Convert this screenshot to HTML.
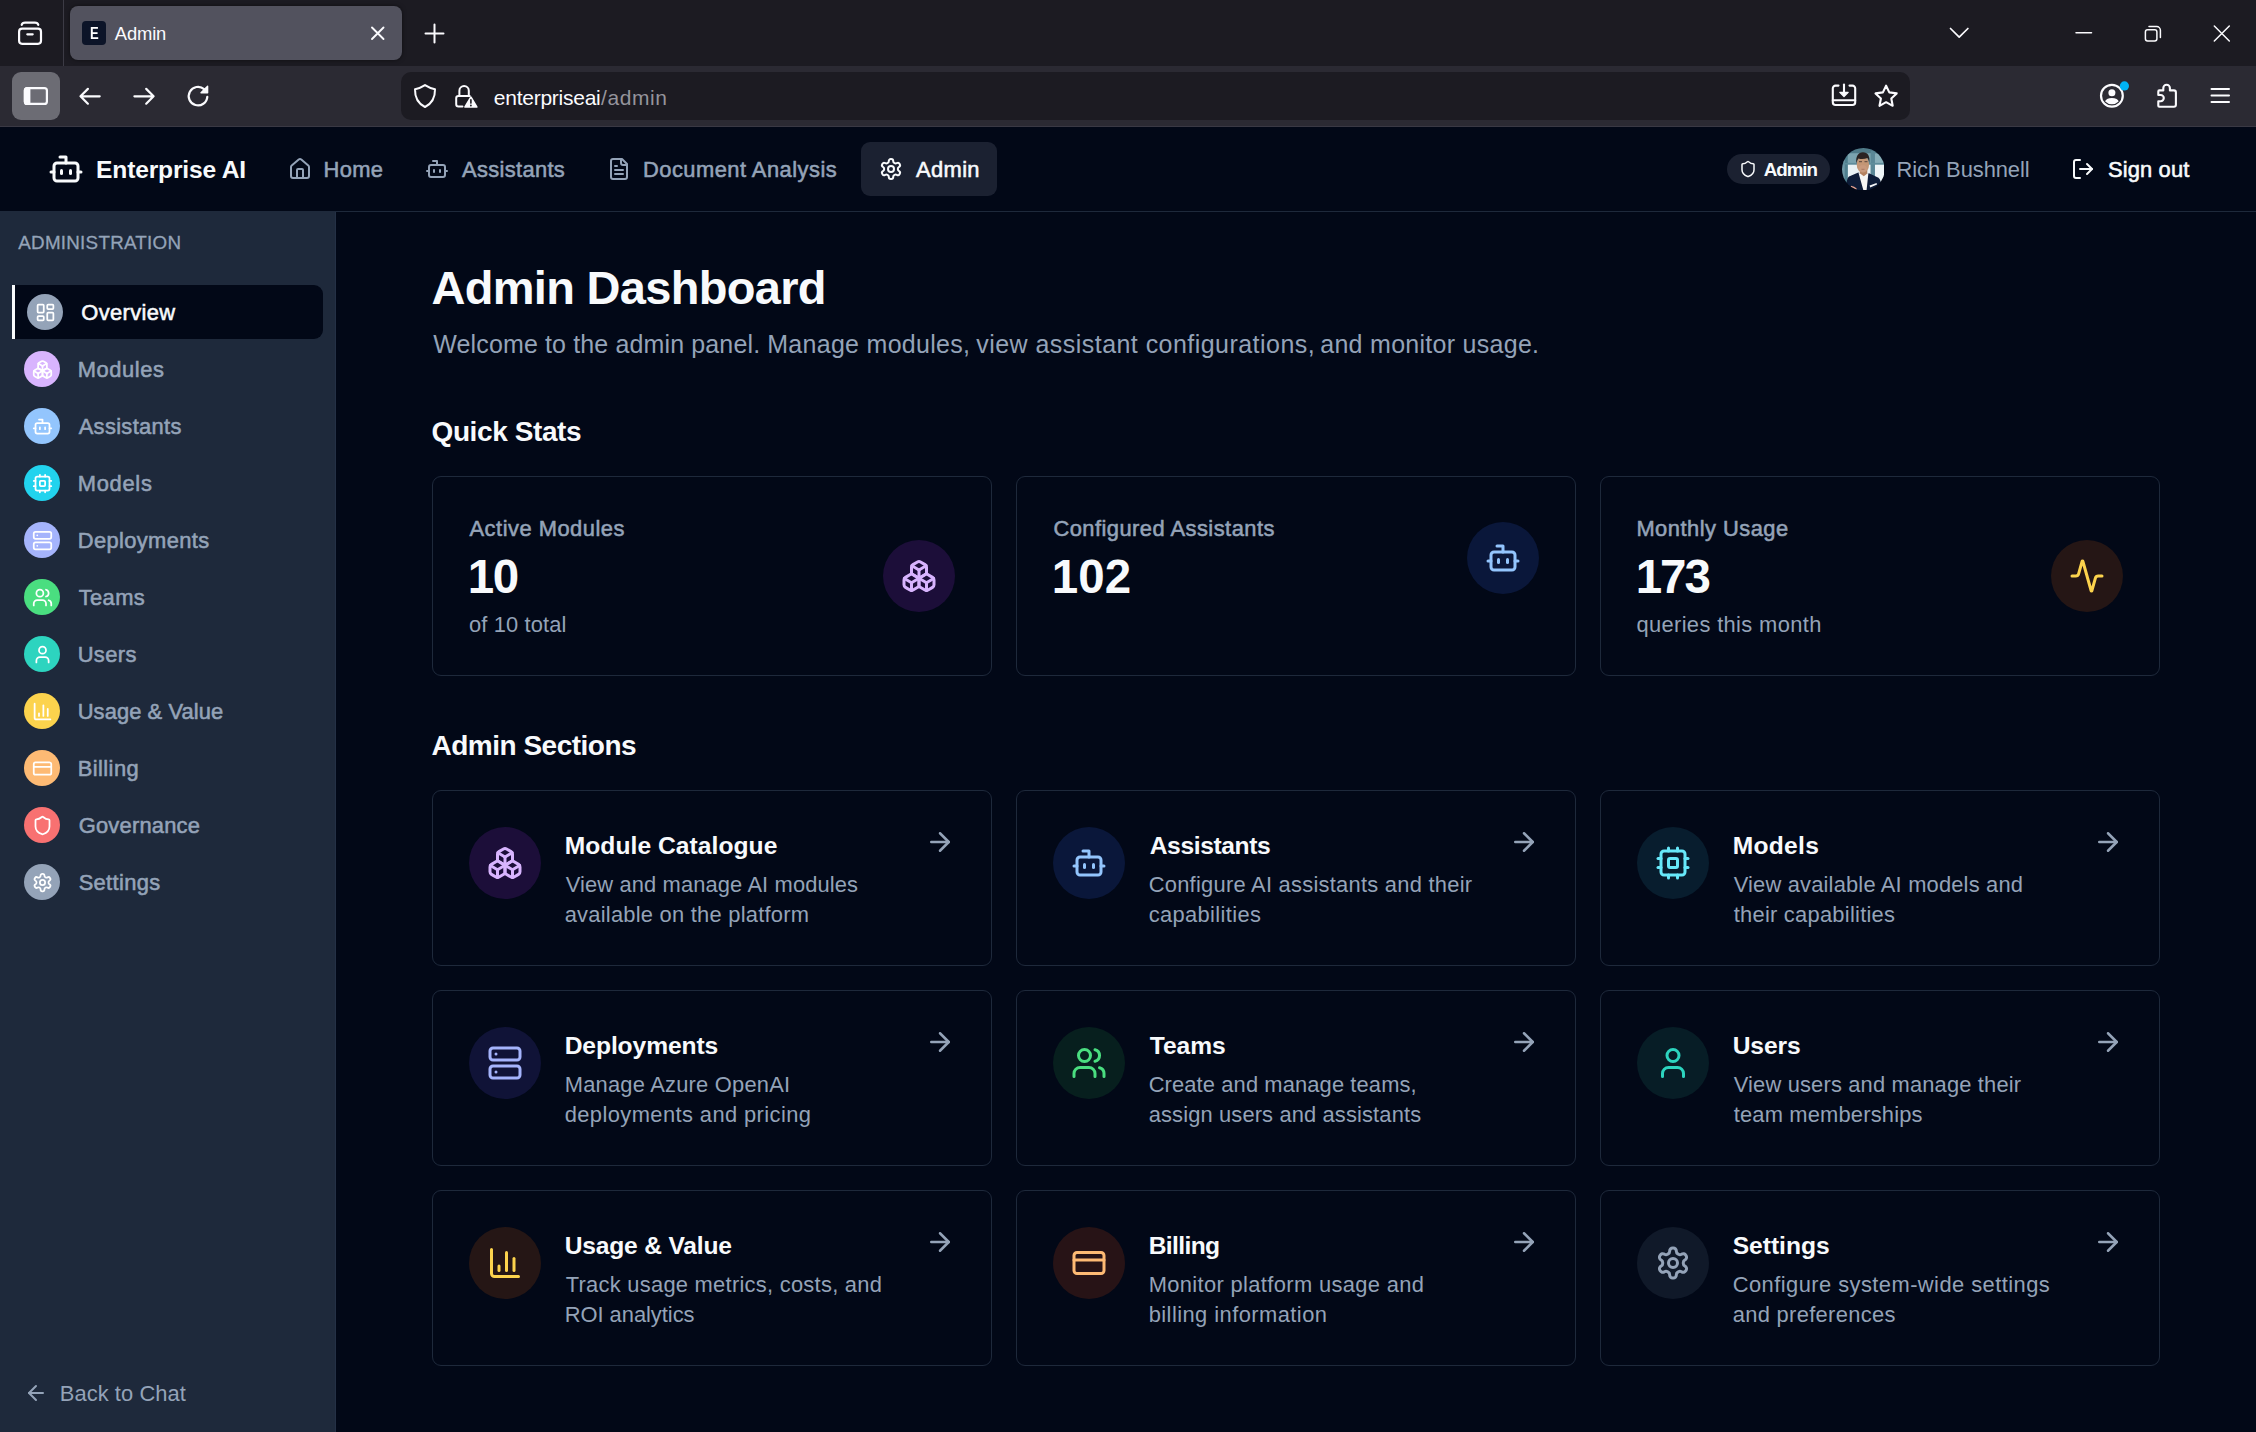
<!DOCTYPE html><html lang="en"><head><meta charset="utf-8"><title>Admin</title><style>
html,body{margin:0;padding:0;background:#020817;}
body{width:2256px;height:1432px;position:relative;overflow:hidden;font-family:"Liberation Sans",sans-serif;}
.abs,.ic,.t{position:absolute;display:block}
.t{line-height:1;white-space:pre;margin:0;padding:0}
</style></head><body>
<div id="browser-chrome">
<div class="abs" style="left:0;top:0;width:2256px;height:66px;background:#1c1b22"></div>
<div class="abs" style="left:0;top:66px;width:2256px;height:60px;background:#2b2a33"></div>
<div class="abs" style="left:0;top:126px;width:2256px;height:1px;background:#3a3944"></div>
<div class="abs" style="left:63px;top:0;width:1px;height:66px;background:#3c3b45"></div>
<div class="abs" style="left:70px;top:6px;width:332px;height:54px;border-radius:8px;background:#52525e;box-shadow:0 0 4px rgba(0,0,0,.5)"></div>
<div class="abs" style="left:82px;top:21px;width:24px;height:24px;border-radius:4px;background:#0c1428"></div>
<div class="abs" style="left:12px;top:72px;width:48px;height:48px;border-radius:9px;background:#6c6c74"></div>
<div class="abs" style="left:401px;top:72px;width:1509px;height:48px;border-radius:10px;background:#1c1b22"></div>
<svg class="abs" style="left:0;top:0" width="2256" height="127" viewBox="0 0 2256 127"><g fill="none" stroke="#fbfbfe" stroke-linecap="round" stroke-linejoin="round" stroke-width="2.2"><rect x="19.1" y="28.700" width="21.900" height="15.100" rx="3"/><path d="M21.700 24.900q.600-2.200 3.400-2.200h9.800q2.800 0 3.400 2.200"/><path d="M27.300 34.300h5.400"/></g><g fill="none" stroke="#fbfbfe" stroke-linecap="round" stroke-linejoin="round" stroke-width="1.9"><path d="M372 27.5l11.5 11.5M383.500 27.5l-11.500 11.500"/></g><g fill="none" stroke="#fbfbfe" stroke-linecap="round" stroke-linejoin="round" stroke-width="2"><path d="M425.500 33.5h18M434.500 24.5v18"/></g><g fill="none" stroke="#fbfbfe" stroke-linecap="round" stroke-linejoin="round" stroke-width="2.2"><rect x="24.900" y="88.100" width="22" height="15.800" rx="2.500"/><path d="M24.900 90.600a2.500 2.500 0 0 1 2.500-2.500h1.900v15.800h-1.900a2.500 2.500 0 0 1-2.500-2.500z" fill="#fbfbfe"/></g><g fill="none" stroke="#fbfbfe" stroke-linecap="round" stroke-linejoin="round" stroke-width="2.2"><path d="M99.700 96.300H80.500M87.900 88.900l-7.400 7.400 7.400 7.400"/><path d="M134.400 96.300h19.200M146.200 88.900l7.400 7.400-7.400 7.400"/></g><g fill="none" stroke="#fbfbfe" stroke-linecap="round" stroke-linejoin="round" stroke-width="2.2"><path d="M207.300 96.800a9.300 9.300 0 1 1-3.200-7.700"/><path d="M207.600 86.200v6.600h-6.600z" fill="#fbfbfe" stroke-width="1.4"/></g><g fill="none" stroke="#fbfbfe" stroke-linecap="round" stroke-linejoin="round" stroke-width="2"><path d="M425 85.100c-3.100 2-6.400 3.400-10 4.100-.2 8.900 3.400 14.500 10 17.800 6.600-3.300 10.200-8.900 10-17.800-3.600-.7-6.900-2.100-10-4.100z"/></g><g fill="none" stroke="#fbfbfe" stroke-linecap="round" stroke-linejoin="round" stroke-width="2"><path d="M459.400 96v-5.300a4.700 4.700 0 0 1 9.400 0V96"/><path d="M462.500 106.500h-4a2.300 2.300 0 0 1-2.300-2.300v-5.900a2.300 2.300 0 0 1 2.300-2.300h11.200"/></g><path d="M470.900 97.300l5.800 9.600h-11.600z" fill="#fbfbfe" stroke="#fbfbfe" stroke-width="1.800" stroke-linejoin="round"/><path d="M470.900 99.800v3.300" stroke="#1c1b22" stroke-width="1.600" stroke-linecap="round"/><circle cx="470.900" cy="105.500" r=".9" fill="#1c1b22"/><g fill="none" stroke="#fbfbfe" stroke-linecap="round" stroke-linejoin="round" stroke-width="2.100"><path d="M1838.500 85.600h-3a2.700 2.700 0 0 0-2.700 2.700v14a2.700 2.700 0 0 0 2.700 2.700h17a2.700 2.700 0 0 0 2.700-2.700v-14a2.700 2.700 0 0 0-2.700-2.700h-3"/><path d="M1832.800 100.300h22.400"/><path d="M1844 84.500v9"/><path d="M1839.800 92.300l4.200 4.200 4.200-4.200z" fill="#fbfbfe" stroke-width="1.200"/></g><g fill="none" stroke="#fbfbfe" stroke-linecap="round" stroke-linejoin="round" stroke-width="2.100"><path d="M1886.100 85.700l3.200 6.700 7.400 1-5.400 5.100 1.400 7.300-6.600-3.600-6.600 3.600 1.400-7.300-5.400-5.100 7.400-1z"/></g><g fill="none" stroke="#fbfbfe" stroke-linecap="round" stroke-linejoin="round" stroke-width="2.200"><circle cx="2111.900" cy="95.800" r="10.900"/></g><circle cx="2111.900" cy="92.800" r="3.500" fill="#fbfbfe"/><path d="M2105.200 101.600a6.700 3.600 0 0 1 13.400 0q-2.600 2.700-6.700 2.700t-6.700-2.700z" fill="#fbfbfe"/><circle cx="2124.400" cy="85.900" r="4.600" fill="#00b3f4"/><g fill="none" stroke="#fbfbfe" stroke-linecap="round" stroke-linejoin="round" stroke-width="2.100"><path d="M2163.300 90.400v-2.400a3.300 3.300 0 0 1 6.600 0v2.400h4a2 2 0 0 1 2 2v12.300a2 2 0 0 1-2 2h-14.600a1 1 0 0 1-1-1v-4.500h2.400a3.100 3.100 0 0 0 0-6.200h-2.400v-3.600a1 1 0 0 1 1-1z"/></g><g fill="none" stroke="#fbfbfe" stroke-linecap="round" stroke-linejoin="round" stroke-width="2"><path d="M2211.500 89h17.500M2211.500 95.500h17.500M2211.500 102h17.500"/></g><g fill="none" stroke="#fbfbfe" stroke-linecap="round" stroke-linejoin="round" stroke-width="1.700"><path d="M1950.500 28.500l8.700 8.700 8.700-8.700"/></g><g fill="none" stroke="#fbfbfe" stroke-linecap="round" stroke-linejoin="round" stroke-width="1.500" stroke-linecap="butt"><path d="M2076 32.700h15.500"/><rect x="2145.400" y="29.800" width="11.500" height="11.200" rx="2.200"/><path d="M2149 26.600h7.700a3.700 3.700 0 0 1 3.700 3.700v7.300"/><path d="M2214.300 26l15 15M2229.300 26l-15 15"/></g></svg>
<span class="t" style="left:114.80px;top:25px;color:#fbfbfe;font-size:18.4px;font-weight:400;letter-spacing:-0.150px;">Admin</span>
<span class="t" style="left:493.80px;top:87px;color:#fbfbfe;font-size:21px;font-weight:400;letter-spacing:-0.255px;">enterpriseai</span>
<span class="t" style="left:601.00px;top:87px;color:#95949c;font-size:21px;font-weight:400;letter-spacing:0.600px;">/admin</span>
<span class="t" style="left:89.90px;top:26px;color:#ffffff;font-size:15.7px;font-weight:700;transform:scaleX(0.83);transform-origin:0 0;">E</span>
</div>
<header id="app-header">
<div class="abs" style="left:0px;top:127px;width:2256px;height:84px;background:#020817"></div>
<div class="abs" style="left:0px;top:211px;width:2256px;height:1px;background:#1e293b"></div>
<svg class="ic" style="left:48px;top:151px" width="36" height="36" viewBox="0 0 24 24" fill="none" stroke="#f8fafc" stroke-width="2" stroke-linecap="round" stroke-linejoin="round"><path d="M12 8V4H8"/><rect width="16" height="12" x="4" y="8" rx="2"/><path d="M2 14h2"/><path d="M20 14h2"/><path d="M15 13v2"/><path d="M9 13v2"/></svg>
<svg class="ic" style="left:288px;top:157px" width="24" height="24" viewBox="0 0 24 24" fill="none" stroke="#94a3b8" stroke-width="2" stroke-linecap="round" stroke-linejoin="round"><path d="M15 21v-8a1 1 0 0 0-1-1h-4a1 1 0 0 0-1 1v8"/><path d="M3 10a2 2 0 0 1 .709-1.528l7-5.999a2 2 0 0 1 2.582 0l7 5.999A2 2 0 0 1 21 10v9a2 2 0 0 1-2 2H5a2 2 0 0 1-2-2z"/></svg>
<svg class="ic" style="left:425px;top:157px" width="24" height="24" viewBox="0 0 24 24" fill="none" stroke="#94a3b8" stroke-width="2" stroke-linecap="round" stroke-linejoin="round"><path d="M12 8V4H8"/><rect width="16" height="12" x="4" y="8" rx="2"/><path d="M2 14h2"/><path d="M20 14h2"/><path d="M15 13v2"/><path d="M9 13v2"/></svg>
<svg class="ic" style="left:607px;top:157px" width="24" height="24" viewBox="0 0 24 24" fill="none" stroke="#94a3b8" stroke-width="2" stroke-linecap="round" stroke-linejoin="round"><path d="M15 2H6a2 2 0 0 0-2 2v16a2 2 0 0 0 2 2h12a2 2 0 0 0 2-2V7Z"/><path d="M14 2v4a2 2 0 0 0 2 2h4"/><path d="M10 9H8"/><path d="M16 13H8"/><path d="M16 17H8"/></svg>
<div class="abs" style="left:861px;top:142px;width:136px;height:54px;border-radius:9px;background:#1b2131"></div>
<svg class="ic" style="left:879px;top:157px" width="24" height="24" viewBox="0 0 24 24" fill="none" stroke="#f8fafc" stroke-width="2" stroke-linecap="round" stroke-linejoin="round"><path d="M12.22 2h-.44a2 2 0 0 0-2 2v.18a2 2 0 0 1-1 1.73l-.43.25a2 2 0 0 1-2 0l-.15-.08a2 2 0 0 0-2.73.73l-.22.38a2 2 0 0 0 .73 2.73l.15.1a2 2 0 0 1 1 1.72v.51a2 2 0 0 1-1 1.74l-.15.09a2 2 0 0 0-.73 2.73l.22.38a2 2 0 0 0 2.73.73l.15-.08a2 2 0 0 1 2 0l.43.25a2 2 0 0 1 1 1.73V20a2 2 0 0 0 2 2h.44a2 2 0 0 0 2-2v-.18a2 2 0 0 1 1-1.73l.43-.25a2 2 0 0 1 2 0l.15.08a2 2 0 0 0 2.73-.73l.22-.39a2 2 0 0 0-.73-2.73l-.15-.08a2 2 0 0 1-1-1.74v-.5a2 2 0 0 1 1-1.74l.15-.09a2 2 0 0 0 .73-2.73l-.22-.38a2 2 0 0 0-2.73-.73l-.15.08a2 2 0 0 1-2 0l-.43-.25a2 2 0 0 1-1-1.73V4a2 2 0 0 0-2-2z"/><circle cx="12" cy="12" r="3"/></svg>
<div class="abs" style="left:1727px;top:154px;width:103px;height:30px;border-radius:15px;background:#1b2131"></div>
<svg class="ic" style="left:1739px;top:160px" width="18" height="18" viewBox="0 0 24 24" fill="none" stroke="#f8fafc" stroke-width="2" stroke-linecap="round" stroke-linejoin="round"><path d="M20 13c0 5-3.5 7.5-7.66 8.950a1 1 0 0 1-.67-.010C7.5 20.5 4 18 4 13V6a1 1 0 0 1 1-1c2 0 4.500-1.200 6.240-2.720a1.170 1.170 0 0 1 1.520 0C14.510 3.810 17 5 19 5a1 1 0 0 1 1 1z"/></svg>
<svg class="abs" style="left:1841.65px;top:147.65px" width="42.7" height="42.7" viewBox="0 0 42.700 42.700"><defs><clipPath id="av"><circle cx="21.350" cy="21.350" r="21.350"/></clipPath><filter id="avb" x="-10%" y="-10%" width="120%" height="120%"><feGaussianBlur stdDeviation=".55"/></filter></defs><g clip-path="url(#av)"><g filter="url(#avb)"><rect x="-2" y="-2" width="47" height="47" fill="#6f99a6"/><rect x="-2" y="-2" width="47" height="7" fill="#4f7a88"/><rect x="5.700" y="16.500" width="23" height="20" fill="#e9f2f5"/><rect x="32.900" y="16.500" width="12" height="22" fill="#eef5f7"/><rect x="5.700" y="6" width="23" height="9" fill="#7aa3af"/><rect x="32.900" y="6" width="12" height="9" fill="#86adb8"/><rect x="2.700" y="3" width="3" height="40" fill="#4f7f8e"/><rect x="28.700" y="3" width="4.200" height="40" fill="#5a8796"/><rect x="-2" y="14.900" width="47" height="1.600" fill="#5f8d9b"/><path d="M4.500 43c-.5-8 .5-13 2.500-14.500l9.300-4 5 3 5.700-2.200 9.500 4.500c2.500 2 3 7 3 13.200z" fill="#0f1b38"/><path d="M16.500 24.800l5.300 19h2.600l2-18.500-4.600 1.700z" fill="#f6f6f4"/><path d="M17.800 20h7.500v5.600l-3.500 2.600-4-3z" fill="#b5825f"/><ellipse cx="20.900" cy="16.600" rx="6.200" ry="8.100" fill="#c39674"/><ellipse cx="20.900" cy="20.500" rx="4" ry="3.600" fill="#c99a7d"/><path d="M14.500 15.500c-1.200-7 1.800-11.300 6.400-11.300 4.800 0 7.600 3.900 6.300 11-.3-2.500-.9-4-1.800-5.200-2.600 1.200-6.400 1.300-9 .5-.9 1.200-1.500 2.700-1.900 5z" fill="#2b2321"/><path d="M17 13.700h3M22.500 13.700h3" stroke="#4a3a33" stroke-width=".9"/><path d="M19.500 21.300h3" stroke="#9c6a56" stroke-width=".7"/><path d="M27.600 37.600l7-2.600.4 1.600-6.800 2.800z" fill="#f4f6f8"/><path d="M9 37.800c2 .3 4.500 1.500 6 3.300l-1 1c-2-1.300-4-2-5.500-2.800z" fill="#e0a090"/></g></g></svg>
<svg class="ic" style="left:2070.5px;top:157px" width="24" height="24" viewBox="0 0 24 24" fill="none" stroke="#f8fafc" stroke-width="2" stroke-linecap="round" stroke-linejoin="round"><path d="M9 21H5a2 2 0 0 1-2-2V5a2 2 0 0 1 2-2h4"/><polyline points="16 17 21 12 16 7"/><line x1="21" x2="9" y1="12" y2="12"/></svg>
<span class="t" style="left:96.10px;top:158px;color:#f8fafc;font-size:24.6px;font-weight:700;letter-spacing:-0.183px;">Enterprise AI</span>
<span class="t" style="left:323.50px;top:159px;color:#94a3b8;font-size:21.9px;font-weight:400;letter-spacing:0.333px;-webkit-text-stroke:0.55px currentColor;">Home</span>
<span class="t" style="left:462.00px;top:159px;color:#94a3b8;font-size:21.9px;font-weight:400;letter-spacing:0.333px;-webkit-text-stroke:0.55px currentColor;">Assistants</span>
<span class="t" style="left:643.00px;top:159px;color:#94a3b8;font-size:21.9px;font-weight:400;letter-spacing:0.469px;-webkit-text-stroke:0.55px currentColor;">Document Analysis</span>
<span class="t" style="left:916.00px;top:159px;color:#f8fafc;font-size:21.9px;font-weight:400;letter-spacing:0.375px;-webkit-text-stroke:0.55px currentColor;">Admin</span>
<span class="t" style="left:1763.80px;top:161px;color:#f8fafc;font-size:18.8px;font-weight:700;letter-spacing:-1.075px;">Admin</span>
<span class="t" style="left:1896.50px;top:159px;color:#94a3b8;font-size:21.9px;font-weight:400;letter-spacing:-0.058px;">Rich Bushnell</span>
<span class="t" style="left:2108.00px;top:159px;color:#f8fafc;font-size:21.9px;font-weight:400;letter-spacing:0.143px;-webkit-text-stroke:0.55px currentColor;">Sign out</span>
</header>
<aside id="admin-sidebar">
<div class="abs" style="left:0px;top:212px;width:336px;height:1220px;background:#1e293b"></div>
<div class="abs" style="left:335px;top:212px;width:1px;height:1220px;background:#243045"></div>
<div class="abs" style="left:12px;top:285px;width:311px;height:54px;background:#020817;border-left:3px solid #f8fafc;border-radius:0 9px 9px 0;box-sizing:border-box"></div>
<div class="abs" style="left:27px;top:294px;width:36px;height:36px;border-radius:50%;background:#94a3b8"></div>
<svg class="ic" style="left:34.5px;top:301.5px" width="21" height="21" viewBox="0 0 24 24" fill="none" stroke="#ffffff" stroke-width="2" stroke-linecap="round" stroke-linejoin="round"><rect width="7" height="9" x="3" y="3" rx="1"/><rect width="7" height="5" x="14" y="3" rx="1"/><rect width="7" height="9" x="14" y="12" rx="1"/><rect width="7" height="5" x="3" y="16" rx="1"/></svg>
<div class="abs" style="left:24px;top:351px;width:36px;height:36px;border-radius:50%;background:#d8b4fe"></div>
<svg class="ic" style="left:31.5px;top:358.5px" width="21" height="21" viewBox="0 0 24 24" fill="none" stroke="#ffffff" stroke-width="2" stroke-linecap="round" stroke-linejoin="round"><path d="M2.970 12.920A2 2 0 0 0 2 14.630v3.240a2 2 0 0 0 .970 1.710l3 1.800a2 2 0 0 0 2.060 0L12 19v-5.500l-5-3-4.030 2.420Z"/><path d="m7 16.500-4.740-2.850"/><path d="m7 16.500 5-3"/><path d="M7 16.500v5.170"/><path d="M12 13.500V19l3.970 2.380a2 2 0 0 0 2.060 0l3-1.800a2 2 0 0 0 .970-1.710v-3.240a2 2 0 0 0-.970-1.710L17 10.500l-5 3Z"/><path d="m17 16.500-5-3"/><path d="m17 16.500 4.740-2.850"/><path d="M17 16.500v5.170"/><path d="M7.970 4.420A2 2 0 0 0 7 6.130v4.370l5 3 5-3V6.130a2 2 0 0 0-.970-1.710l-3-1.800a2 2 0 0 0-2.060 0l-3 1.800Z"/><path d="M12 8 7.260 5.150"/><path d="m12 8 4.740-2.850"/><path d="M12 13.500V8"/></svg>
<div class="abs" style="left:24px;top:408px;width:36px;height:36px;border-radius:50%;background:#93c5fd"></div>
<svg class="ic" style="left:31.5px;top:415.5px" width="21" height="21" viewBox="0 0 24 24" fill="none" stroke="#ffffff" stroke-width="2" stroke-linecap="round" stroke-linejoin="round"><path d="M12 8V4H8"/><rect width="16" height="12" x="4" y="8" rx="2"/><path d="M2 14h2"/><path d="M20 14h2"/><path d="M15 13v2"/><path d="M9 13v2"/></svg>
<div class="abs" style="left:24px;top:465px;width:36px;height:36px;border-radius:50%;background:#22d3ee"></div>
<svg class="ic" style="left:31.5px;top:472.5px" width="21" height="21" viewBox="0 0 24 24" fill="none" stroke="#ffffff" stroke-width="2" stroke-linecap="round" stroke-linejoin="round"><rect width="16" height="16" x="4" y="4" rx="2"/><rect width="6" height="6" x="9" y="9" rx="1"/><path d="M15 2v2"/><path d="M15 20v2"/><path d="M2 15h2"/><path d="M2 9h2"/><path d="M20 15h2"/><path d="M20 9h2"/><path d="M9 2v2"/><path d="M9 20v2"/></svg>
<div class="abs" style="left:24px;top:522px;width:36px;height:36px;border-radius:50%;background:#a5b4fc"></div>
<svg class="ic" style="left:31.5px;top:529.5px" width="21" height="21" viewBox="0 0 24 24" fill="none" stroke="#ffffff" stroke-width="2" stroke-linecap="round" stroke-linejoin="round"><rect width="20" height="8" x="2" y="2" rx="2" ry="2"/><rect width="20" height="8" x="2" y="14" rx="2" ry="2"/><line x1="6" x2="6.010" y1="6" y2="6"/><line x1="6" x2="6.010" y1="18" y2="18"/></svg>
<div class="abs" style="left:24px;top:579px;width:36px;height:36px;border-radius:50%;background:#4ade80"></div>
<svg class="ic" style="left:31.5px;top:586.5px" width="21" height="21" viewBox="0 0 24 24" fill="none" stroke="#ffffff" stroke-width="2" stroke-linecap="round" stroke-linejoin="round"><path d="M16 21v-2a4 4 0 0 0-4-4H6a4 4 0 0 0-4 4v2"/><circle cx="9" cy="7" r="4"/><path d="M22 21v-2a4 4 0 0 0-3-3.870"/><path d="M16 3.130a4 4 0 0 1 0 7.750"/></svg>
<div class="abs" style="left:24px;top:636px;width:36px;height:36px;border-radius:50%;background:#2dd4bf"></div>
<svg class="ic" style="left:31.5px;top:643.5px" width="21" height="21" viewBox="0 0 24 24" fill="none" stroke="#ffffff" stroke-width="2" stroke-linecap="round" stroke-linejoin="round"><path d="M19 21v-2a4 4 0 0 0-4-4H9a4 4 0 0 0-4 4v2"/><circle cx="12" cy="7" r="4"/></svg>
<div class="abs" style="left:24px;top:693px;width:36px;height:36px;border-radius:50%;background:#fcd34d"></div>
<svg class="ic" style="left:31.5px;top:700.5px" width="21" height="21" viewBox="0 0 24 24" fill="none" stroke="#ffffff" stroke-width="2" stroke-linecap="round" stroke-linejoin="round"><path d="M3 3v16a2 2 0 0 0 2 2h16"/><path d="M18 17V9"/><path d="M13 17V5"/><path d="M8 17v-3"/></svg>
<div class="abs" style="left:24px;top:750px;width:36px;height:36px;border-radius:50%;background:#fdba74"></div>
<svg class="ic" style="left:31.5px;top:757.5px" width="21" height="21" viewBox="0 0 24 24" fill="none" stroke="#ffffff" stroke-width="2" stroke-linecap="round" stroke-linejoin="round"><rect width="20" height="14" x="2" y="5" rx="2"/><line x1="2" x2="22" y1="10" y2="10"/></svg>
<div class="abs" style="left:24px;top:807px;width:36px;height:36px;border-radius:50%;background:#f87171"></div>
<svg class="ic" style="left:31.5px;top:814.5px" width="21" height="21" viewBox="0 0 24 24" fill="none" stroke="#ffffff" stroke-width="2" stroke-linecap="round" stroke-linejoin="round"><path d="M20 13c0 5-3.5 7.5-7.66 8.950a1 1 0 0 1-.67-.010C7.5 20.5 4 18 4 13V6a1 1 0 0 1 1-1c2 0 4.500-1.200 6.240-2.720a1.170 1.170 0 0 1 1.520 0C14.510 3.810 17 5 19 5a1 1 0 0 1 1 1z"/></svg>
<div class="abs" style="left:24px;top:864px;width:36px;height:36px;border-radius:50%;background:#94a3b8"></div>
<svg class="ic" style="left:31.5px;top:871.5px" width="21" height="21" viewBox="0 0 24 24" fill="none" stroke="#ffffff" stroke-width="2" stroke-linecap="round" stroke-linejoin="round"><path d="M12.22 2h-.44a2 2 0 0 0-2 2v.18a2 2 0 0 1-1 1.73l-.43.25a2 2 0 0 1-2 0l-.15-.08a2 2 0 0 0-2.73.73l-.22.38a2 2 0 0 0 .73 2.73l.15.1a2 2 0 0 1 1 1.72v.51a2 2 0 0 1-1 1.74l-.15.09a2 2 0 0 0-.73 2.73l.22.38a2 2 0 0 0 2.73.73l.15-.08a2 2 0 0 1 2 0l.43.25a2 2 0 0 1 1 1.73V20a2 2 0 0 0 2 2h.44a2 2 0 0 0 2-2v-.18a2 2 0 0 1 1-1.73l.43-.25a2 2 0 0 1 2 0l.15.08a2 2 0 0 0 2.73-.73l.22-.39a2 2 0 0 0-.73-2.73l-.15-.08a2 2 0 0 1-1-1.74v-.5a2 2 0 0 1 1-1.74l.15-.09a2 2 0 0 0 .73-2.73l-.22-.38a2 2 0 0 0-2.73-.73l-.15.08a2 2 0 0 1-2 0l-.43-.25a2 2 0 0 1-1-1.73V4a2 2 0 0 0-2-2z"/><circle cx="12" cy="12" r="3"/></svg>
<svg class="ic" style="left:23.7px;top:1381.4px" width="24" height="24" viewBox="0 0 24 24" fill="none" stroke="#94a3b8" stroke-width="2" stroke-linecap="round" stroke-linejoin="round"><path d="m12 19-7-7 7-7"/><path d="M19 12H5"/></svg>
<span class="t" style="left:18.30px;top:234px;color:#94a3b8;font-size:18.8px;font-weight:400;letter-spacing:0.262px;-webkit-text-stroke:0.3px currentColor;">ADMINISTRATION</span>
<span class="t" style="left:81.30px;top:302px;color:#f8fafc;font-size:21.9px;font-weight:400;letter-spacing:0.357px;-webkit-text-stroke:0.55px currentColor;">Overview</span>
<span class="t" style="left:77.70px;top:359px;color:#94a3b8;font-size:21.9px;font-weight:400;letter-spacing:0.583px;-webkit-text-stroke:0.55px currentColor;">Modules</span>
<span class="t" style="left:78.70px;top:416px;color:#94a3b8;font-size:21.9px;font-weight:400;letter-spacing:0.333px;-webkit-text-stroke:0.55px currentColor;">Assistants</span>
<span class="t" style="left:77.70px;top:473px;color:#94a3b8;font-size:21.9px;font-weight:400;letter-spacing:0.720px;-webkit-text-stroke:0.55px currentColor;">Models</span>
<span class="t" style="left:77.70px;top:530px;color:#94a3b8;font-size:21.9px;font-weight:400;letter-spacing:0.380px;-webkit-text-stroke:0.55px currentColor;">Deployments</span>
<span class="t" style="left:78.70px;top:587px;color:#94a3b8;font-size:21.9px;font-weight:400;letter-spacing:0.400px;-webkit-text-stroke:0.55px currentColor;">Teams</span>
<span class="t" style="left:77.70px;top:644px;color:#94a3b8;font-size:21.9px;font-weight:400;letter-spacing:0.375px;-webkit-text-stroke:0.55px currentColor;">Users</span>
<span class="t" style="left:77.70px;top:701px;color:#94a3b8;font-size:21.9px;font-weight:400;letter-spacing:0.092px;-webkit-text-stroke:0.55px currentColor;">Usage &amp; Value</span>
<span class="t" style="left:77.70px;top:758px;color:#94a3b8;font-size:21.9px;font-weight:400;letter-spacing:0.433px;-webkit-text-stroke:0.55px currentColor;">Billing</span>
<span class="t" style="left:78.70px;top:815px;color:#94a3b8;font-size:21.9px;font-weight:400;letter-spacing:0.222px;-webkit-text-stroke:0.55px currentColor;">Governance</span>
<span class="t" style="left:78.70px;top:872px;color:#94a3b8;font-size:21.9px;font-weight:400;letter-spacing:0.329px;-webkit-text-stroke:0.55px currentColor;">Settings</span>
<span class="t" style="left:59.80px;top:1383px;color:#94a3b8;font-size:21.9px;font-weight:400;letter-spacing:0.064px;">Back to Chat</span>
</aside>
<main id="admin-main">
<div class="abs" style="left:336px;top:212px;width:1920px;height:1220px;background:#020817"></div>
<div class="abs" style="left:432px;top:476px;width:560px;height:200px;border:1px solid #1e293b;border-radius:9px;box-sizing:border-box"></div>
<div class="abs" style="left:883px;top:540px;width:72px;height:72px;border-radius:50%;background:#1c0e39"></div>
<svg class="ic" style="left:901px;top:558px" width="36" height="36" viewBox="0 0 24 24" fill="none" stroke="#d8b4fe" stroke-width="2" stroke-linecap="round" stroke-linejoin="round"><path d="M2.970 12.920A2 2 0 0 0 2 14.630v3.240a2 2 0 0 0 .970 1.710l3 1.800a2 2 0 0 0 2.060 0L12 19v-5.500l-5-3-4.030 2.420Z"/><path d="m7 16.500-4.740-2.850"/><path d="m7 16.500 5-3"/><path d="M7 16.500v5.170"/><path d="M12 13.500V19l3.970 2.380a2 2 0 0 0 2.060 0l3-1.800a2 2 0 0 0 .970-1.710v-3.240a2 2 0 0 0-.970-1.710L17 10.500l-5 3Z"/><path d="m17 16.500-5-3"/><path d="m17 16.500 4.740-2.850"/><path d="M17 16.500v5.170"/><path d="M7.970 4.420A2 2 0 0 0 7 6.130v4.370l5 3 5-3V6.130a2 2 0 0 0-.970-1.710l-3-1.800a2 2 0 0 0-2.060 0l-3 1.800Z"/><path d="M12 8 7.260 5.150"/><path d="m12 8 4.740-2.850"/><path d="M12 13.500V8"/></svg>
<div class="abs" style="left:1016px;top:476px;width:560px;height:200px;border:1px solid #1e293b;border-radius:9px;box-sizing:border-box"></div>
<div class="abs" style="left:1467px;top:522px;width:72px;height:72px;border-radius:50%;background:#0a173a"></div>
<svg class="ic" style="left:1485px;top:540px" width="36" height="36" viewBox="0 0 24 24" fill="none" stroke="#93c5fd" stroke-width="2" stroke-linecap="round" stroke-linejoin="round"><path d="M12 8V4H8"/><rect width="16" height="12" x="4" y="8" rx="2"/><path d="M2 14h2"/><path d="M20 14h2"/><path d="M15 13v2"/><path d="M9 13v2"/></svg>
<div class="abs" style="left:1600px;top:476px;width:560px;height:200px;border:1px solid #1e293b;border-radius:9px;box-sizing:border-box"></div>
<div class="abs" style="left:2051px;top:540px;width:72px;height:72px;border-radius:50%;background:#251615"></div>
<svg class="ic" style="left:2069px;top:558px" width="36" height="36" viewBox="0 0 24 24" fill="none" stroke="#fcd34d" stroke-width="2" stroke-linecap="round" stroke-linejoin="round"><path d="M22 12h-2.480a2 2 0 0 0-1.930 1.460l-2.350 8.360a.250.250 0 0 1-.480 0L9.240 2.180a.250.250 0 0 0-.480 0l-2.350 8.360A2 2 0 0 1 4.490 12H2"/></svg>
<div class="abs" style="left:432px;top:790px;width:560px;height:176px;border:1px solid #1e293b;border-radius:9px;box-sizing:border-box"></div>
<div class="abs" style="left:469px;top:827px;width:72px;height:72px;border-radius:50%;background:#1c0e39"></div>
<svg class="ic" style="left:487px;top:845px" width="36" height="36" viewBox="0 0 24 24" fill="none" stroke="#d8b4fe" stroke-width="2" stroke-linecap="round" stroke-linejoin="round"><path d="M2.970 12.920A2 2 0 0 0 2 14.630v3.240a2 2 0 0 0 .970 1.710l3 1.800a2 2 0 0 0 2.060 0L12 19v-5.500l-5-3-4.030 2.420Z"/><path d="m7 16.500-4.740-2.850"/><path d="m7 16.500 5-3"/><path d="M7 16.500v5.170"/><path d="M12 13.500V19l3.970 2.380a2 2 0 0 0 2.060 0l3-1.800a2 2 0 0 0 .970-1.710v-3.240a2 2 0 0 0-.970-1.710L17 10.500l-5 3Z"/><path d="m17 16.500-5-3"/><path d="m17 16.500 4.740-2.850"/><path d="M17 16.500v5.170"/><path d="M7.970 4.420A2 2 0 0 0 7 6.130v4.370l5 3 5-3V6.130a2 2 0 0 0-.970-1.710l-3-1.800a2 2 0 0 0-2.060 0l-3 1.800Z"/><path d="M12 8 7.260 5.150"/><path d="m12 8 4.740-2.850"/><path d="M12 13.500V8"/></svg>
<svg class="ic" style="left:925px;top:827px" width="30" height="30" viewBox="0 0 24 24" fill="none" stroke="#94a3b8" stroke-width="2" stroke-linecap="round" stroke-linejoin="round"><path d="M5 12h14"/><path d="m12 5 7 7-7 7"/></svg>
<div class="abs" style="left:1016px;top:790px;width:560px;height:176px;border:1px solid #1e293b;border-radius:9px;box-sizing:border-box"></div>
<div class="abs" style="left:1053px;top:827px;width:72px;height:72px;border-radius:50%;background:#0a173a"></div>
<svg class="ic" style="left:1071px;top:845px" width="36" height="36" viewBox="0 0 24 24" fill="none" stroke="#93c5fd" stroke-width="2" stroke-linecap="round" stroke-linejoin="round"><path d="M12 8V4H8"/><rect width="16" height="12" x="4" y="8" rx="2"/><path d="M2 14h2"/><path d="M20 14h2"/><path d="M15 13v2"/><path d="M9 13v2"/></svg>
<svg class="ic" style="left:1509px;top:827px" width="30" height="30" viewBox="0 0 24 24" fill="none" stroke="#94a3b8" stroke-width="2" stroke-linecap="round" stroke-linejoin="round"><path d="M5 12h14"/><path d="m12 5 7 7-7 7"/></svg>
<div class="abs" style="left:1600px;top:790px;width:560px;height:176px;border:1px solid #1e293b;border-radius:9px;box-sizing:border-box"></div>
<div class="abs" style="left:1637px;top:827px;width:72px;height:72px;border-radius:50%;background:#081d2e"></div>
<svg class="ic" style="left:1655px;top:845px" width="36" height="36" viewBox="0 0 24 24" fill="none" stroke="#67e8f9" stroke-width="2" stroke-linecap="round" stroke-linejoin="round"><rect width="16" height="16" x="4" y="4" rx="2"/><rect width="6" height="6" x="9" y="9" rx="1"/><path d="M15 2v2"/><path d="M15 20v2"/><path d="M2 15h2"/><path d="M2 9h2"/><path d="M20 15h2"/><path d="M20 9h2"/><path d="M9 2v2"/><path d="M9 20v2"/></svg>
<svg class="ic" style="left:2093px;top:827px" width="30" height="30" viewBox="0 0 24 24" fill="none" stroke="#94a3b8" stroke-width="2" stroke-linecap="round" stroke-linejoin="round"><path d="M5 12h14"/><path d="m12 5 7 7-7 7"/></svg>
<div class="abs" style="left:432px;top:990px;width:560px;height:176px;border:1px solid #1e293b;border-radius:9px;box-sizing:border-box"></div>
<div class="abs" style="left:469px;top:1027px;width:72px;height:72px;border-radius:50%;background:#101337"></div>
<svg class="ic" style="left:487px;top:1045px" width="36" height="36" viewBox="0 0 24 24" fill="none" stroke="#a5b4fc" stroke-width="2" stroke-linecap="round" stroke-linejoin="round"><rect width="20" height="8" x="2" y="2" rx="2" ry="2"/><rect width="20" height="8" x="2" y="14" rx="2" ry="2"/><line x1="6" x2="6.010" y1="6" y2="6"/><line x1="6" x2="6.010" y1="18" y2="18"/></svg>
<svg class="ic" style="left:925px;top:1027px" width="30" height="30" viewBox="0 0 24 24" fill="none" stroke="#94a3b8" stroke-width="2" stroke-linecap="round" stroke-linejoin="round"><path d="M5 12h14"/><path d="m12 5 7 7-7 7"/></svg>
<div class="abs" style="left:1016px;top:990px;width:560px;height:176px;border:1px solid #1e293b;border-radius:9px;box-sizing:border-box"></div>
<div class="abs" style="left:1053px;top:1027px;width:72px;height:72px;border-radius:50%;background:#071f1e"></div>
<svg class="ic" style="left:1071px;top:1045px" width="36" height="36" viewBox="0 0 24 24" fill="none" stroke="#4ade80" stroke-width="2" stroke-linecap="round" stroke-linejoin="round"><path d="M16 21v-2a4 4 0 0 0-4-4H6a4 4 0 0 0-4 4v2"/><circle cx="9" cy="7" r="4"/><path d="M22 21v-2a4 4 0 0 0-3-3.870"/><path d="M16 3.130a4 4 0 0 1 0 7.750"/></svg>
<svg class="ic" style="left:1509px;top:1027px" width="30" height="30" viewBox="0 0 24 24" fill="none" stroke="#94a3b8" stroke-width="2" stroke-linecap="round" stroke-linejoin="round"><path d="M5 12h14"/><path d="m12 5 7 7-7 7"/></svg>
<div class="abs" style="left:1600px;top:990px;width:560px;height:176px;border:1px solid #1e293b;border-radius:9px;box-sizing:border-box"></div>
<div class="abs" style="left:1637px;top:1027px;width:72px;height:72px;border-radius:50%;background:#071d26"></div>
<svg class="ic" style="left:1655px;top:1045px" width="36" height="36" viewBox="0 0 24 24" fill="none" stroke="#2dd4bf" stroke-width="2" stroke-linecap="round" stroke-linejoin="round"><path d="M19 21v-2a4 4 0 0 0-4-4H9a4 4 0 0 0-4 4v2"/><circle cx="12" cy="7" r="4"/></svg>
<svg class="ic" style="left:2093px;top:1027px" width="30" height="30" viewBox="0 0 24 24" fill="none" stroke="#94a3b8" stroke-width="2" stroke-linecap="round" stroke-linejoin="round"><path d="M5 12h14"/><path d="m12 5 7 7-7 7"/></svg>
<div class="abs" style="left:432px;top:1190px;width:560px;height:176px;border:1px solid #1e293b;border-radius:9px;box-sizing:border-box"></div>
<div class="abs" style="left:469px;top:1227px;width:72px;height:72px;border-radius:50%;background:#251615"></div>
<svg class="ic" style="left:487px;top:1245px" width="36" height="36" viewBox="0 0 24 24" fill="none" stroke="#fcd34d" stroke-width="2" stroke-linecap="round" stroke-linejoin="round"><path d="M3 3v16a2 2 0 0 0 2 2h16"/><path d="M18 17V9"/><path d="M13 17V5"/><path d="M8 17v-3"/></svg>
<svg class="ic" style="left:925px;top:1227px" width="30" height="30" viewBox="0 0 24 24" fill="none" stroke="#94a3b8" stroke-width="2" stroke-linecap="round" stroke-linejoin="round"><path d="M5 12h14"/><path d="m12 5 7 7-7 7"/></svg>
<div class="abs" style="left:1016px;top:1190px;width:560px;height:176px;border:1px solid #1e293b;border-radius:9px;box-sizing:border-box"></div>
<div class="abs" style="left:1053px;top:1227px;width:72px;height:72px;border-radius:50%;background:#271316"></div>
<svg class="ic" style="left:1071px;top:1245px" width="36" height="36" viewBox="0 0 24 24" fill="none" stroke="#fdba74" stroke-width="2" stroke-linecap="round" stroke-linejoin="round"><rect width="20" height="14" x="2" y="5" rx="2"/><line x1="2" x2="22" y1="10" y2="10"/></svg>
<svg class="ic" style="left:1509px;top:1227px" width="30" height="30" viewBox="0 0 24 24" fill="none" stroke="#94a3b8" stroke-width="2" stroke-linecap="round" stroke-linejoin="round"><path d="M5 12h14"/><path d="m12 5 7 7-7 7"/></svg>
<div class="abs" style="left:1600px;top:1190px;width:560px;height:176px;border:1px solid #1e293b;border-radius:9px;box-sizing:border-box"></div>
<div class="abs" style="left:1637px;top:1227px;width:72px;height:72px;border-radius:50%;background:#101929"></div>
<svg class="ic" style="left:1655px;top:1245px" width="36" height="36" viewBox="0 0 24 24" fill="none" stroke="#94a3b8" stroke-width="2" stroke-linecap="round" stroke-linejoin="round"><path d="M12.22 2h-.44a2 2 0 0 0-2 2v.18a2 2 0 0 1-1 1.73l-.43.25a2 2 0 0 1-2 0l-.15-.08a2 2 0 0 0-2.73.73l-.22.38a2 2 0 0 0 .73 2.73l.15.1a2 2 0 0 1 1 1.72v.51a2 2 0 0 1-1 1.74l-.15.09a2 2 0 0 0-.73 2.73l.22.38a2 2 0 0 0 2.73.73l.15-.08a2 2 0 0 1 2 0l.43.25a2 2 0 0 1 1 1.73V20a2 2 0 0 0 2 2h.44a2 2 0 0 0 2-2v-.18a2 2 0 0 1 1-1.73l.43-.25a2 2 0 0 1 2 0l.15.08a2 2 0 0 0 2.73-.73l.22-.39a2 2 0 0 0-.73-2.73l-.15-.08a2 2 0 0 1-1-1.74v-.5a2 2 0 0 1 1-1.74l.15-.09a2 2 0 0 0 .73-2.73l-.22-.38a2 2 0 0 0-2.73-.73l-.15.08a2 2 0 0 1-2 0l-.43-.25a2 2 0 0 1-1-1.73V4a2 2 0 0 0-2-2z"/><circle cx="12" cy="12" r="3"/></svg>
<svg class="ic" style="left:2093px;top:1227px" width="30" height="30" viewBox="0 0 24 24" fill="none" stroke="#94a3b8" stroke-width="2" stroke-linecap="round" stroke-linejoin="round"><path d="M5 12h14"/><path d="m12 5 7 7-7 7"/></svg>
<h1 class="t" style="left:431.50px;top:264px;color:#f8fafc;font-size:47px;font-weight:700;letter-spacing:-0.693px;">Admin Dashboard</h1>
<p class="t" style="left:433.25px;top:332px;color:#94a3b8;font-size:25px;font-weight:400;letter-spacing:0.135px;">Welcome to the admin panel.</p>
<p class="t" style="left:767.20px;top:332px;color:#94a3b8;font-size:25px;font-weight:400;letter-spacing:0.293px;">Manage modules,</p>
<p class="t" style="left:976.25px;top:332px;color:#94a3b8;font-size:25px;font-weight:400;letter-spacing:0.457px;">view assistant configurations,</p>
<p class="t" style="left:1320.25px;top:332px;color:#94a3b8;font-size:25px;font-weight:400;letter-spacing:0.279px;">and monitor usage.</p>
<h2 class="t" style="left:431.50px;top:418px;color:#f8fafc;font-size:28px;font-weight:700;letter-spacing:-0.400px;">Quick Stats</h2>
<h2 class="t" style="left:431.50px;top:732px;color:#f8fafc;font-size:28px;font-weight:700;letter-spacing:-0.500px;">Admin Sections</h2>
<p class="t" style="left:469.50px;top:518px;color:#94a3b8;font-size:21.9px;font-weight:400;letter-spacing:0.500px;-webkit-text-stroke:0.55px currentColor;">Active Modules</p>
<span class="t" style="left:467.70px;top:553px;color:#f8fafc;font-size:47.5px;font-weight:700;letter-spacing:-1.400px;">10</span>
<p class="t" style="left:469.00px;top:614px;color:#94a3b8;font-size:21.9px;font-weight:400;letter-spacing:0.130px;">of 10 total</p>
<p class="t" style="left:1053.40px;top:518px;color:#94a3b8;font-size:21.9px;font-weight:400;letter-spacing:0.465px;-webkit-text-stroke:0.55px currentColor;">Configured Assistants</p>
<span class="t" style="left:1051.70px;top:553px;color:#f8fafc;font-size:47.5px;font-weight:700;letter-spacing:0.150px;">102</span>
<p class="t" style="left:1636.40px;top:518px;color:#94a3b8;font-size:21.9px;font-weight:400;letter-spacing:0.483px;-webkit-text-stroke:0.55px currentColor;">Monthly Usage</p>
<span class="t" style="left:1635.70px;top:553px;color:#f8fafc;font-size:47.5px;font-weight:700;letter-spacing:-2.050px;">173</span>
<p class="t" style="left:1636.40px;top:614px;color:#94a3b8;font-size:21.9px;font-weight:400;letter-spacing:0.359px;">queries this month</p>
<h3 class="t" style="left:564.70px;top:834px;color:#f8fafc;font-size:24.6px;font-weight:700;letter-spacing:0.060px;">Module Catalogue</h3>
<p class="t" style="left:565.70px;top:874px;color:#94a3b8;font-size:21.9px;font-weight:400;letter-spacing:0.124px;">View and manage AI modules</p>
<p class="t" style="left:564.70px;top:904px;color:#94a3b8;font-size:21.9px;font-weight:400;letter-spacing:0.242px;">available on the platform</p>
<h3 class="t" style="left:1149.70px;top:834px;color:#f8fafc;font-size:24.6px;font-weight:700;letter-spacing:-0.367px;">Assistants</h3>
<p class="t" style="left:1148.70px;top:874px;color:#94a3b8;font-size:21.9px;font-weight:400;letter-spacing:0.259px;">Configure AI assistants and their</p>
<p class="t" style="left:1148.70px;top:904px;color:#94a3b8;font-size:21.9px;font-weight:400;letter-spacing:0.355px;">capabilities</p>
<h3 class="t" style="left:1732.70px;top:834px;color:#f8fafc;font-size:24.6px;font-weight:700;letter-spacing:0.300px;">Models</h3>
<p class="t" style="left:1733.70px;top:874px;color:#94a3b8;font-size:21.9px;font-weight:400;letter-spacing:0.181px;">View available AI models and</p>
<p class="t" style="left:1733.70px;top:904px;color:#94a3b8;font-size:21.9px;font-weight:400;letter-spacing:0.253px;">their capabilities</p>
<h3 class="t" style="left:564.70px;top:1034px;color:#f8fafc;font-size:24.6px;font-weight:700;letter-spacing:-0.090px;">Deployments</h3>
<p class="t" style="left:564.70px;top:1074px;color:#94a3b8;font-size:21.9px;font-weight:400;letter-spacing:0.222px;">Manage Azure OpenAI</p>
<p class="t" style="left:564.70px;top:1104px;color:#94a3b8;font-size:21.9px;font-weight:400;letter-spacing:0.409px;">deployments and pricing</p>
<h3 class="t" style="left:1149.70px;top:1034px;color:#f8fafc;font-size:24.6px;font-weight:700;">Teams</h3>
<p class="t" style="left:1148.70px;top:1074px;color:#94a3b8;font-size:21.9px;font-weight:400;letter-spacing:0.117px;">Create and manage teams,</p>
<p class="t" style="left:1148.70px;top:1104px;color:#94a3b8;font-size:21.9px;font-weight:400;letter-spacing:0.135px;">assign users and assistants</p>
<h3 class="t" style="left:1732.70px;top:1034px;color:#f8fafc;font-size:24.6px;font-weight:700;letter-spacing:-0.100px;">Users</h3>
<p class="t" style="left:1733.70px;top:1074px;color:#94a3b8;font-size:21.9px;font-weight:400;letter-spacing:0.165px;">View users and manage their</p>
<p class="t" style="left:1733.70px;top:1104px;color:#94a3b8;font-size:21.9px;font-weight:400;letter-spacing:0.180px;">team memberships</p>
<h3 class="t" style="left:564.70px;top:1234px;color:#f8fafc;font-size:24.6px;font-weight:700;letter-spacing:-0.183px;">Usage &amp; Value</h3>
<p class="t" style="left:565.70px;top:1274px;color:#94a3b8;font-size:21.9px;font-weight:400;letter-spacing:0.267px;">Track usage metrics, costs, and</p>
<p class="t" style="left:564.70px;top:1304px;color:#94a3b8;font-size:21.9px;font-weight:400;letter-spacing:-0.025px;">ROI analytics</p>
<h3 class="t" style="left:1148.70px;top:1234px;color:#f8fafc;font-size:24.6px;font-weight:700;letter-spacing:-0.617px;">Billing</h3>
<p class="t" style="left:1148.70px;top:1274px;color:#94a3b8;font-size:21.9px;font-weight:400;letter-spacing:0.352px;">Monitor platform usage and</p>
<p class="t" style="left:1148.70px;top:1304px;color:#94a3b8;font-size:21.9px;font-weight:400;letter-spacing:0.439px;">billing information</p>
<h3 class="t" style="left:1732.70px;top:1234px;color:#f8fafc;font-size:24.6px;font-weight:700;letter-spacing:-0.014px;">Settings</h3>
<p class="t" style="left:1732.70px;top:1274px;color:#94a3b8;font-size:21.9px;font-weight:400;letter-spacing:0.445px;">Configure system-wide settings</p>
<p class="t" style="left:1732.70px;top:1304px;color:#94a3b8;font-size:21.9px;font-weight:400;letter-spacing:0.321px;">and preferences</p>
</main>
</body></html>
